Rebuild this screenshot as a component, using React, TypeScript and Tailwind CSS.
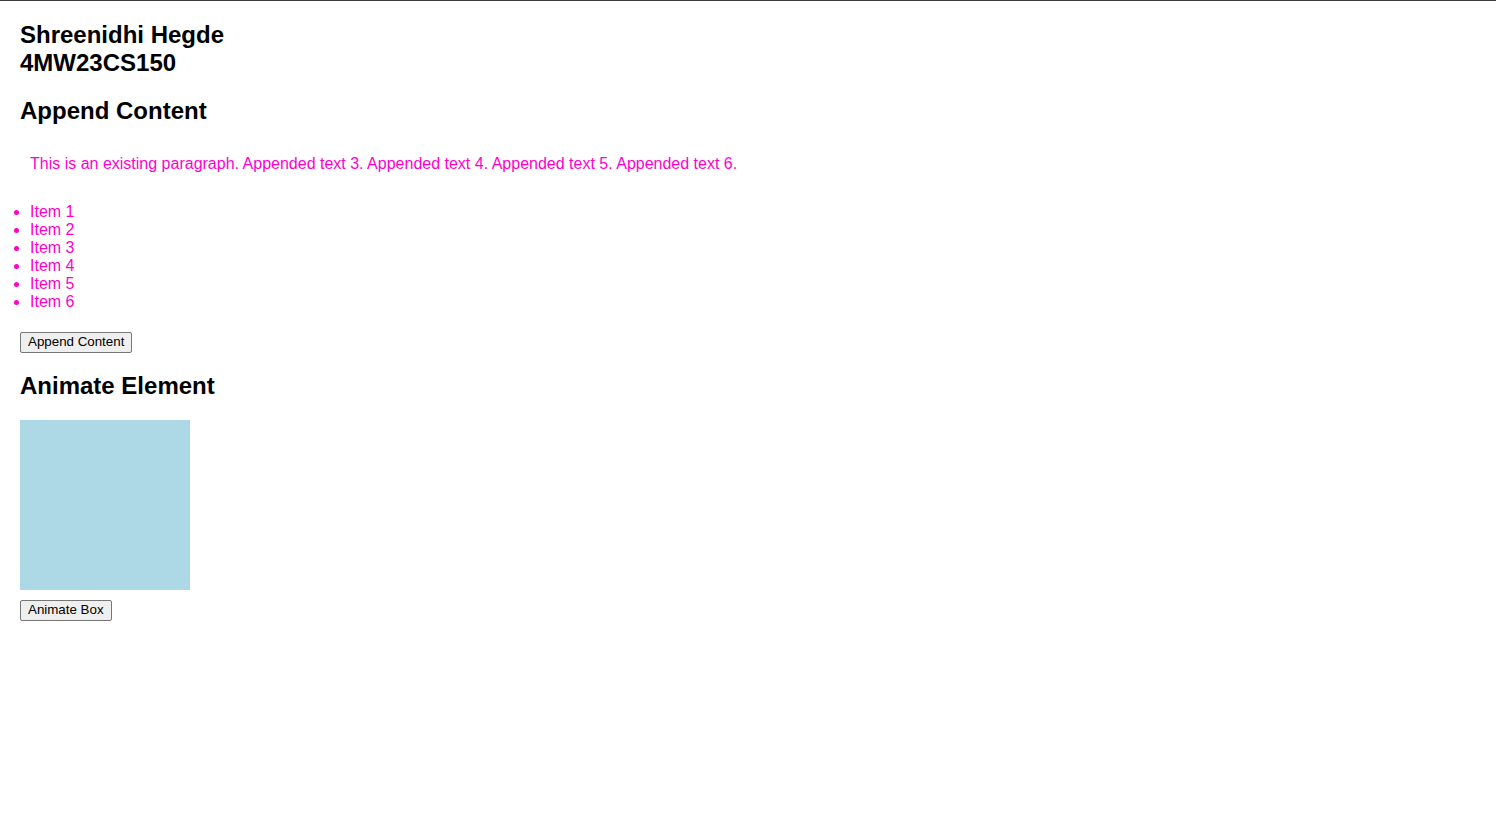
export default function App() {
  const items = ['Item 1', 'Item 2', 'Item 3', 'Item 4', 'Item 5', 'Item 6'];
  return (
    <div className="min-h-[832px] border-t border-[#3c3c3c] bg-white px-5 pt-5 font-['Liberation_Sans',Arial,sans-serif] text-black">
      <h2 className="mb-5 text-[24px] font-bold leading-[28px]">
        Shreenidhi Hegde
        <br />
        4MW23CS150
      </h2>
      <h2 className="mb-5 text-[24px] font-bold leading-[28px]">Append Content</h2>
      <p className="p-[10px] text-[16px] leading-[18px] text-[#ff00cc]">
        This is an existing paragraph. Appended text 3. Appended text 4. Appended text 5. Appended text 6.
      </p>
      <ul className="mt-[20px] list-disc pl-[10px] text-[16px] leading-[18px] text-[#ff00cc]">
        {items.map((it) => (
          <li key={it}>{it}</li>
        ))}
      </ul>
      <button
        type="button"
        className="mt-[21px] block rounded-[2px] border border-[#767676] bg-[#efefef] px-[7px] pt-0 pb-[2px] text-[13.33px] leading-[17px] text-black"
      >
        Append Content
      </button>
      <h2 className="mt-[19px] text-[24px] font-bold leading-[28px]">Animate Element</h2>
      <div className="mt-5 h-[170px] w-[170px] bg-[#add8e6]" />
      <button
        type="button"
        className="mt-[10px] block rounded-[2px] border border-[#767676] bg-[#efefef] px-[7px] pt-0 pb-[2px] text-[13.33px] leading-[17px] text-black"
      >
        Animate Box
      </button>
    </div>
  );
}
